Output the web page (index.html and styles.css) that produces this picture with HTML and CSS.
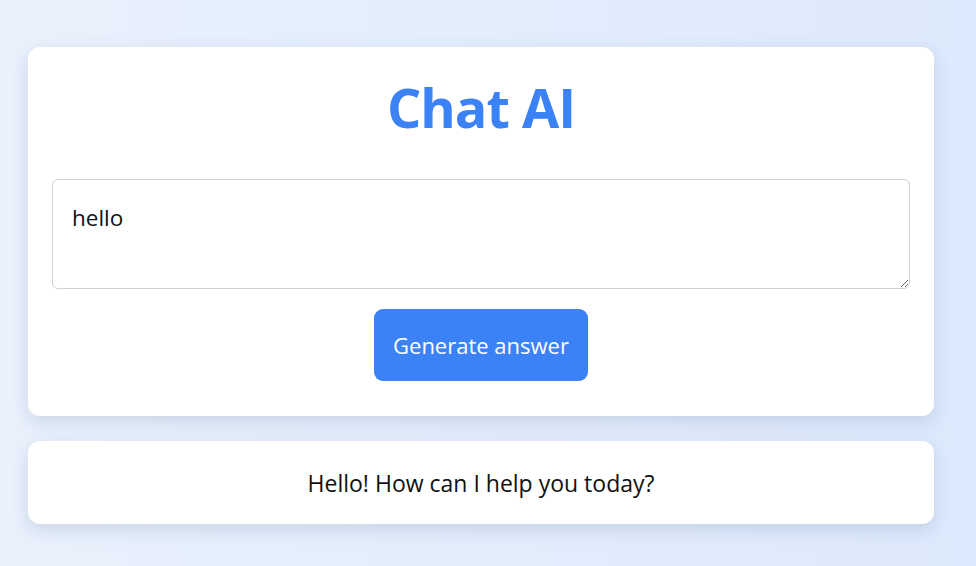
FILE: index.html
```html
<!DOCTYPE html>
<html lang="en">
<head>
<meta charset="utf-8">
<title>Chat AI</title>
<link rel="stylesheet" href="styles.css">
</head>
<body>
<main class="page">
  <section class="card card-main">
    <h1 class="title">Chat AI</h1>
    <textarea class="prompt">hello</textarea>
    <button class="generate" type="button">Generate answer</button>
  </section>
  <section class="card card-answer">
    <p class="answer">Hello! How can I help you today?</p>
  </section>
</main>
</body>
</html>
```

FILE: styles.css
```css
html, body {
  height: 100%;
}
body {
  margin: 0;
  background: linear-gradient(90deg, #e9f1fc 0%, #e3edfc 50%, #dde9fc 100%);
  font-family: "Open Sans", "Noto Sans", sans-serif;
  color: #111;
}
.page {
  display: flex;
  flex-direction: column;
  gap: 25px;
  padding: 47px 42px 0 28px;
}
.card {
  background: #fff;
  border-radius: 12px;
  box-shadow: 0 6px 18px rgba(90, 110, 150, 0.2);
}
.card-main {
  display: flex;
  flex-direction: column;
  align-items: center;
  padding: 24px 24px 35px;
}
.title {
  margin: 0 0 36px;
  font-size: 54px;
  line-height: 72px;
  font-weight: 700;
  color: #3b82f6;
  letter-spacing: -1px;
}
.prompt {
  box-sizing: border-box;
  width: 100%;
  height: 110px;
  padding: 22px 19px 10px;
  border: 1px solid #d0d0d0;
  border-radius: 6px;
  font-family: inherit;
  font-size: 22.5px;
  line-height: 32px;
  color: #111;
  margin: 0;
}
.generate {
  margin-top: 20px;
  width: 214px;
  height: 72px;
  border: none;
  border-radius: 9px;
  background: #3b82f6;
  color: #fff;
  font-family: inherit;
  font-size: 22px;
  padding: 0;
}
.card-answer {
  height: 83px;
  display: flex;
  align-items: center;
  justify-content: center;
}
.answer {
  margin: 0;
  font-size: 23px;
  color: #111;
}
```
